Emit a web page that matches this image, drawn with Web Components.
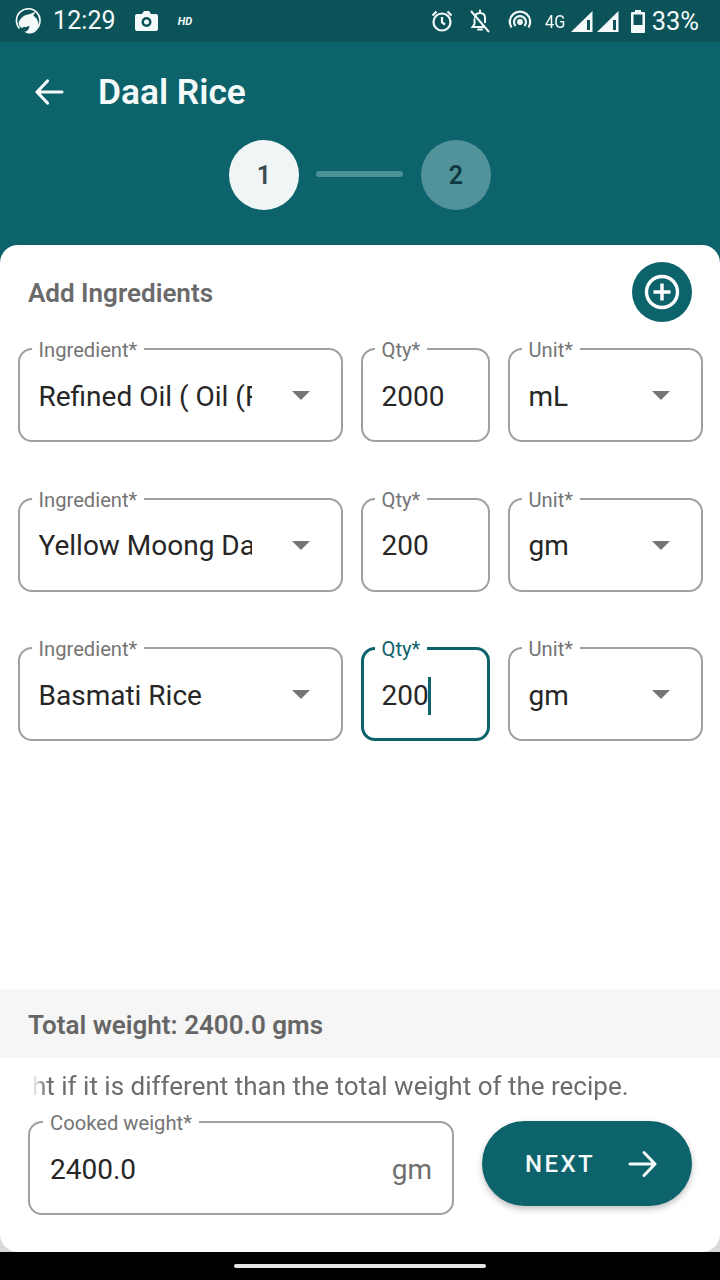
<!DOCTYPE html>
<html lang="en"><head><meta charset="utf-8"><title>Daal Rice</title>
<style>
html,body{margin:0;padding:0;background:#000}
body{width:720px;height:1280px;overflow:hidden;font-family:Roboto,"Liberation Sans",sans-serif}
</style></head><body>
<recipe-screen></recipe-screen>
<script>
const el=(name,css,html)=>{customElements.define(name,class extends HTMLElement{
  connectedCallback(){ if(this.shadowRoot) return; const r=this.attachShadow({mode:'open'});
    r.innerHTML='<style>'+css+'</style>'+(typeof html==='function'?html(this):html);}
});};

el('status-bar',`
:host{display:flex;align-items:center;height:42px;box-sizing:border-box;background:#0b5359;color:#f4fafa;padding:0 21px 0 15px;font-family:Roboto,sans-serif}
svg{display:block;flex:none}
.t{font-size:25px;line-height:42px;letter-spacing:.1px}
.hd{font-size:11px;font-weight:700;font-style:italic;margin-left:20px;width:20px}
.sp{flex:1}
.g{font-size:19px;margin-left:13px;transform:scaleX(.86);transform-origin:left;width:23px;margin-right:3px}
.p{font-size:25.500px;margin-left:7px}
`,`
<svg width="26" height="26" viewBox="0 0 26 26" style="margin-right:12px;margin-top:-1px"><path d="M4.500 20.500A11.800 11.800 0 1 1 21.500 21" fill="none" stroke="#f4fafa" stroke-width="1.600"/><path d="M3.500 15.500C4.500 11 8 7.500 12 6.800L15 6l6-2.500-2.800 4c3.800 2.500 5.800 6.500 5.300 10.500-.6 4.500-4 7.200-8 7.500-2.400.2-4.600-.5-6-1.800 2.800-.3 5-2.500 4.800-6-1.500.8-3.500 1.400-5.500 1.300l-2.200 1-2.300-2z" fill="#f4fafa"/></svg>
<span class="t">12:29</span>
<svg width="23" height="20" viewBox="0 0 23 20" style="margin-left:19px"><path d="M2 3h5l2-3h5l2 3h5a2 2 0 0 1 2 2v13a2 2 0 0 1-2 2H2a2 2 0 0 1-2-2V5a2 2 0 0 1 2-2z" fill="#f4fafa"/><circle cx="11.500" cy="11" r="5" fill="#0b5359"/><circle cx="11.500" cy="11" r="2.500" fill="#f4fafa"/></svg>
<span class="hd">HD</span>
<span class="sp"></span>
<svg width="24" height="24" viewBox="0 0 24 24" fill="none" stroke="#f4fafa" stroke-width="2.200"><circle cx="12" cy="13" r="8.500"/><path d="M12 8v5.500l3 2M2.500 6.500l4-4M21.500 6.500l-4-4"/></svg>
<svg width="24" height="24" viewBox="0 0 24 24" fill="none" stroke="#f4fafa" stroke-width="2" style="margin-left:14px"><path d="M3 2l18 21M7 9c0-3 2-5 5-5s5 2 5 5v5M6.500 9.500V15L4.500 18H17"/><path d="M10 20.500h4M12 1.500v2" stroke-linecap="round"/></svg>
<svg width="24" height="22" viewBox="0 0 24 22" fill="none" stroke="#f4fafa" stroke-width="2.200" style="margin-left:16px"><path d="M3.500 17.500a10.200 10.200 0 1 1 17 0M7.500 16a6 6 0 1 1 9 0"/><circle cx="12" cy="12" r="1.800" fill="#f4fafa"/></svg>
<span class="g">4G</span>
<svg width="22" height="21" viewBox="0 0 22 21"><path d="M21.500 0v21H0z" fill="#f4fafa"/><path d="M16 9h3v10h-3z" fill="#0b5359"/></svg>
<svg width="22" height="21" viewBox="0 0 22 21" style="margin-left:4px"><path d="M21.500 0v21H0z" fill="#f4fafa"/><path d="M16 9h3v10h-3z" fill="#0b5359"/></svg>
<svg width="14" height="23" viewBox="0 0 14 23" style="margin-left:12px"><path d="M4 0h6v2h3a1 1 0 0 1 1 1v19a1 1 0 0 1-1 1H1a1 1 0 0 1-1-1V3a1 1 0 0 1 1-1h3z" fill="#f4fafa"/><path d="M2.500 4.500h9V15h-9z" fill="#0b5359"/></svg>
<span class="p">33%</span>`);

el('app-header',`
:host{display:block;height:203px;background:#0d636b;color:#f4fafa;box-sizing:border-box;font-family:Roboto,sans-serif}
.top{display:flex;align-items:center;height:100px;padding-left:34px;box-sizing:border-box}
h1{margin:0;font-size:35.300px;font-weight:600;margin-left:34px}
svg{display:block}
.steps{display:flex;align-items:center;padding-left:229px;margin-top:-2px}
.c{width:70px;height:70px;border-radius:50%;display:flex;align-items:center;justify-content:center;font-size:25px;font-weight:600}
.a{background:#f0f6f6;color:#3d4a4d}
.b{background:#52929a;color:#0f3940}
.l{width:87px;height:6px;border-radius:3px;background:#4a9198;margin:0 18px 0 17px;position:relative;top:-1px}
`,`
<div class="top"><svg width="30" height="28" viewBox="0 0 30 28" fill="none" stroke="#f4fafa" stroke-width="3.200" stroke-linecap="round" stroke-linejoin="round"><path d="M28 14H3M13.500 3L3 14l10.500 11"/></svg><h1>Daal Rice</h1></div>
<div class="steps"><div class="c a">1</div><div class="l"></div><div class="c b">2</div></div>`);

el('outlined-field',`
:host{display:block;position:relative;box-sizing:border-box;height:94px;border:2px solid var(--bc);border-radius:14px;background:#fff;font-family:Roboto,sans-serif;padding:0 0 0 var(--pl,18.500px);--bc:#a0a0a0}
:host([focused]){--bc:#0d636b;border-width:3px;padding-left:17.500px}
.lab{position:absolute;top:-12px;left:var(--ll,11.500px);padding:0 7px;background:#fff;font-size:20.200px;line-height:24px;color:#757575;white-space:nowrap}
:host([focused]) .lab{color:#0d636b;left:10.500px;top:-13px}
.row{display:flex;align-items:center;height:100%;padding-top:3px;box-sizing:border-box}
.val{font-size:28px;line-height:34px;color:#262626;white-space:nowrap;overflow:hidden;width:var(--vw,auto);display:flex;align-items:center}
.caret{display:inline-block;width:3px;height:38px;background:#0d636b;margin-left:-1px;flex:none}
.arrow{width:0;height:0;border-left:9px solid transparent;border-right:9px solid transparent;border-top:9px solid #757575;position:absolute;right:31px;top:41px}
.suf{margin-left:auto;margin-right:20px;font-size:28px;color:#6f6f6f}
`,(h)=>`<span class="lab">${h.getAttribute('label')}</span>
<div class="row"><span class="val">${h.getAttribute('value')}${h.hasAttribute('focused')?'<i class="caret"></i>':''}</span>${h.getAttribute('suffix')?`<span class="suf">${h.getAttribute('suffix')}</span>`:''}</div>${h.hasAttribute('select')?'<i class="arrow"></i>':''}`);

el('ingredient-row',`
:host{display:grid;grid-template-columns:325px 129px 195px;column-gap:18px}
outlined-field.n{--vw:213px}
`,(h)=>`
<outlined-field class="n" select label="Ingredient*" value="${h.getAttribute('name')}"></outlined-field>
<outlined-field label="Qty*" value="${h.getAttribute('qty')}" ${h.hasAttribute('focused')?'focused':''}></outlined-field>
<outlined-field select label="Unit*" value="${h.getAttribute('unit')}"></outlined-field>`);

el('next-button',`
:host{display:flex;align-items:center;width:210px;height:85px;border-radius:43px;background:#0d636b;color:#f4fafa;font-family:Roboto,sans-serif;font-size:24px;font-weight:500;letter-spacing:2.400px;box-shadow:0 3px 6px rgba(0,0,0,.25);box-sizing:border-box;padding-left:43px;padding-top:1px}
svg{display:block;margin-left:33px}
`,`NEXT<svg width="30" height="28" viewBox="0 0 30 28" fill="none" stroke="#f4fafa" stroke-width="3" stroke-linecap="round" stroke-linejoin="round"><path d="M2 14h25M16 2.500L27 14 16 25.500"/></svg>`);

el('recipe-screen',`
:host{display:flex;flex-direction:column;width:720px;height:1280px;background:#000;font-family:Roboto,sans-serif}
.wrap{background:linear-gradient(#0d636b 0 50px,#d8d8d8 50px);height:1007px;flex:none}
.card{background:#fff;border-radius:18px;height:1007px;display:flex;flex-direction:column;box-sizing:border-box}
.head{display:flex;justify-content:space-between;padding:17px 28px 0;height:103px;box-sizing:border-box;align-items:flex-start}
h2{margin:0;font-size:26px;font-weight:600;color:#6a6a6a;line-height:62px}
.add{width:60px;height:60px;border-radius:50%;background:#0d636b;display:flex;align-items:center;justify-content:center}
.rows{display:flex;flex-direction:column;gap:55.500px;padding:0 18px;flex:none}
.sp{flex:1}
.total{background:#f6f6f6;height:69px;box-sizing:border-box;padding:2px 0 0 28px;display:flex;align-items:center;font-size:26px;font-weight:600;color:#666}
.hint{height:63px;padding:0 0 0 32px;font-size:26px;line-height:56px;color:#6c6c6c;white-space:nowrap;-webkit-mask-image:linear-gradient(90deg,rgba(0,0,0,0) 32px,#000 46px);mask-image:linear-gradient(90deg,rgba(0,0,0,0) 32px,#000 46px)}
.foot{display:flex;align-items:flex-start;justify-content:space-between;padding:0 28px;height:131px}
.foot outlined-field{width:426px;--pl:20px;--ll:13px}
.nav{flex:1;display:flex;align-items:center;justify-content:center;background:#000;padding-bottom:1px}
.nav i{display:block;width:252px;height:4px;background:#e6e6e6;border-radius:2px}
`,`
<status-bar></status-bar>
<app-header></app-header>
<div class="wrap"><div class="card">
  <div class="head"><h2>Add Ingredients</h2><div class="add"><svg width="36" height="36" viewBox="0 0 36 36" fill="none" stroke="#fff" stroke-width="3.400"><circle cx="18" cy="18" r="15.500"/><path d="M18 9.500v17M9.500 18h17"/></svg></div></div>
  <div class="rows">
    <ingredient-row name="Refined Oil ( Oil (Refined)" qty="2000" unit="mL"></ingredient-row>
    <ingredient-row name="Yellow Moong Daal" qty="200" unit="gm"></ingredient-row>
    <ingredient-row name="Basmati Rice" qty="200" unit="gm" focused></ingredient-row>
  </div>
  <div class="sp"></div>
  <div class="total">Total weight: 2400.0 gms</div>
  <div class="hint">ht if it is different than the total weight of the recipe.</div>
  <div class="foot"><outlined-field label="Cooked weight*" value="2400.0" suffix="gm"></outlined-field><next-button></next-button></div>
</div></div>
<div class="nav"><i></i></div>`);
</script>
</body></html>
